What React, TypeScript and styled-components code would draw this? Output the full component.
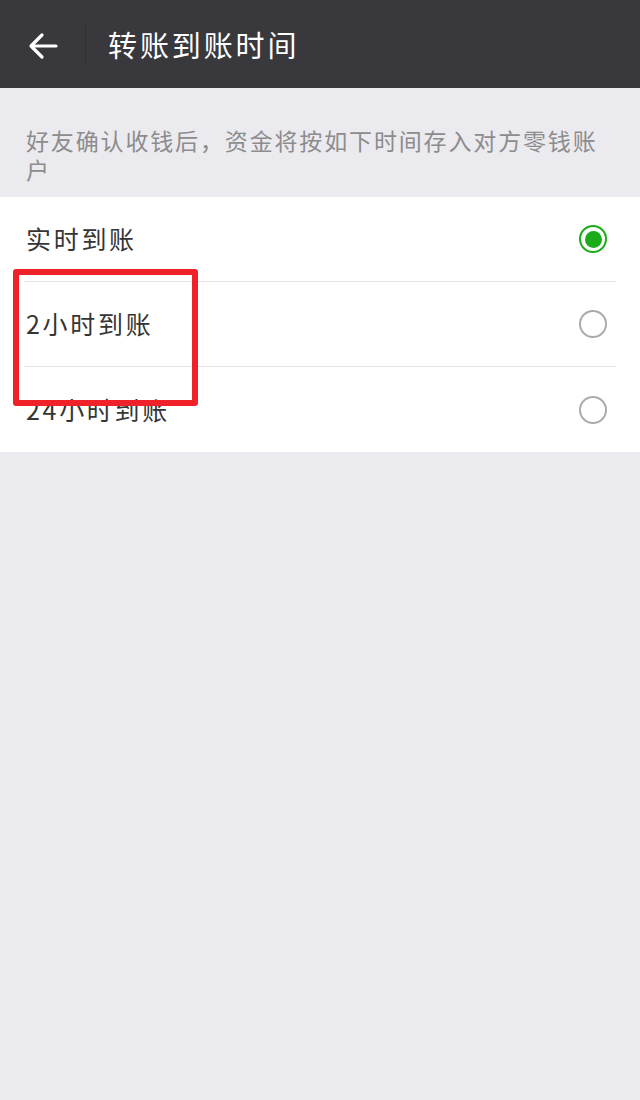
import React, { useState } from 'react';
import styled, { createGlobalStyle } from 'styled-components';

const GlobalStyle = createGlobalStyle`
    html, body {
        margin: 0;
        padding: 0;
        background: #ebeaee;
    }
    body {
        font-family: "Noto Sans CJK SC", "Noto Sans", sans-serif;
    }
`;

const Page = styled.div`
    position: relative;
    width: 640px;
    min-height: 1100px;
    background: #ebeaee;
`;

const Header = styled.div`
    display: flex;
    align-items: center;
    height: 88px;
    background: #38383d;
`;

const BackButton = styled.button`
    display: flex;
    align-items: center;
    justify-content: center;
    width: 86px;
    height: 44px;
    padding: 4px 0 0 0;
    background: none;
    border: none;
    border-right: 1px solid #2f2f33;
    cursor: pointer;
`;

const Title = styled.div`
    margin-left: 22px;
    color: #ffffff;
    font-size: 29px;
    letter-spacing: 2.9px;
    line-height: 1;
`;

const Hint = styled.div`
    padding: 38px 26px 13px 26px;
    color: #8c8c8e;
    font-size: 23px;
    letter-spacing: 1.85px;
    line-height: 29px;
`;

const List = styled.div`
    background: #ffffff;
`;

const Row = styled.div<{ last?: boolean }>`
    display: flex;
    align-items: center;
    justify-content: space-between;
    height: 85px;
    margin-left: 24px;
    margin-right: 24px;
    border-bottom: ${p => (p.last ? 'none' : '1px solid #e2e2e2')};
    box-sizing: border-box;
    cursor: pointer;
`;

const Label = styled.span`
    padding-left: 2px;
    padding-bottom: 2px;
    color: #353535;
    font-size: 25px;
    letter-spacing: 2.7px;
`;

const Radio = styled.span<{ checked: boolean }>`
    display: flex;
    align-items: center;
    justify-content: center;
    width: 28px;
    height: 28px;
    margin-right: 9px;
    border-radius: 50%;
    border: 2px solid ${p => (p.checked ? '#1aad19' : '#ababab')};
    box-sizing: border-box;
    &::after {
        content: '';
        display: ${p => (p.checked ? 'block' : 'none')};
        width: 17px;
        height: 17px;
        border-radius: 50%;
        background: #1aad19;
    }
`;

const Highlight = styled.div`
    position: absolute;
    left: 13px;
    top: 269px;
    width: 185px;
    height: 137px;
    border: 6px solid #ee2228;
    border-radius: 3px;
    box-sizing: border-box;
    pointer-events: none;
`;

const options = ['实时到账', '2小时到账', '24小时到账'];

const App = () => {
    const [selected, setSelected] = useState(0);

    return (
        <Page>
            <GlobalStyle />
            <Header>
                <BackButton type={'button'}>
                    <svg width="32" height="28" viewBox="0 0 32 28">
                        <path
                            d="M29 14 H4 M15 3 L4 14 L15 25"
                            fill="none"
                            stroke="#ffffff"
                            strokeWidth="3.2"
                            strokeLinecap="round"
                            strokeLinejoin="round"
                        />
                    </svg>
                </BackButton>
                <Title>转账到账时间</Title>
            </Header>
            <Hint>好友确认收钱后，资金将按如下时间存入对方零钱账户</Hint>
            <List>
                {options.map((o, i) => (
                    <Row key={o} last={i === options.length - 1} onClick={() => setSelected(i)}>
                        <Label>{o}</Label>
                        <Radio checked={selected === i} />
                    </Row>
                ))}
            </List>
            <Highlight />
        </Page>
    );
};

export default App;
